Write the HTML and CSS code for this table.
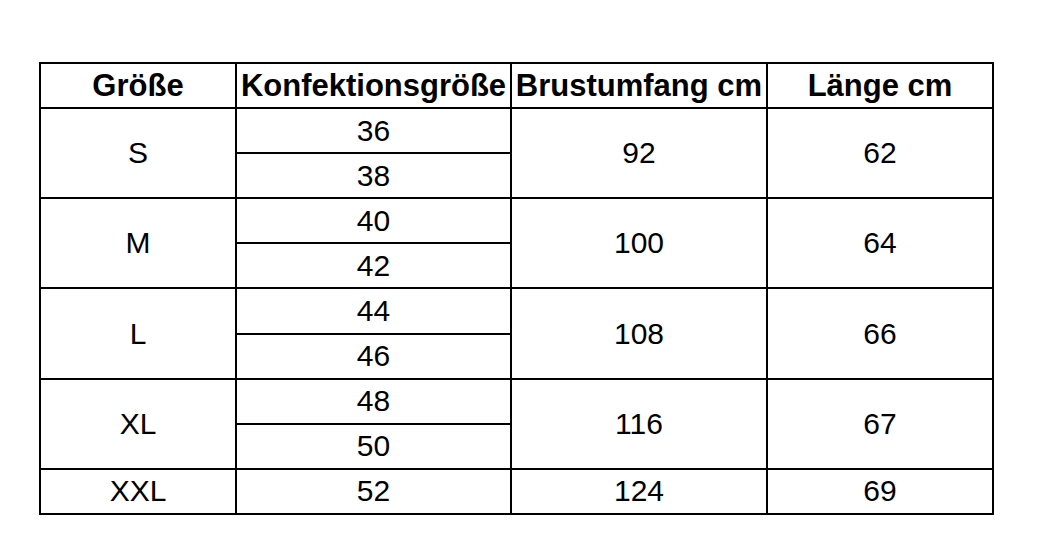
FILE: index.html
```html
<!DOCTYPE html>
<html lang="de">
<head>
<meta charset="utf-8">
<title>Größentabelle</title>
<link rel="stylesheet" href="styles.css">
</head>
<body>
<div class="page">
  <div class="size-table">
    <div class="cell head">Größe</div>
    <div class="cell head">Konfektionsgröße</div>
    <div class="cell head">Brustumfang cm</div>
    <div class="cell head">Länge cm</div>

    <div class="cell span2">S</div>
    <div class="cell">36</div>
    <div class="cell span2">92</div>
    <div class="cell span2">62</div>
    <div class="cell">38</div>

    <div class="cell span2">M</div>
    <div class="cell">40</div>
    <div class="cell span2">100</div>
    <div class="cell span2">64</div>
    <div class="cell">42</div>

    <div class="cell span2">L</div>
    <div class="cell">44</div>
    <div class="cell span2">108</div>
    <div class="cell span2">66</div>
    <div class="cell">46</div>

    <div class="cell span2">XL</div>
    <div class="cell">48</div>
    <div class="cell span2">116</div>
    <div class="cell span2">67</div>
    <div class="cell">50</div>

    <div class="cell">XXL</div>
    <div class="cell">52</div>
    <div class="cell">124</div>
    <div class="cell">69</div>
  </div>
</div>
</body>
</html>
```

FILE: styles.css
```css
html, body {
  margin: 0;
  padding: 0;
  background: #ffffff;
}

.page {
  padding: 62px 0 0 39px;
}

.size-table {
  display: inline-grid;
  grid-template-columns: 194px 273px 254px 224px;
  grid-template-rows: repeat(10, 43.1px);
  gap: 2px;
  padding: 2px;
  background: #000000;
  font-family: "Liberation Sans", Arial, sans-serif;
  color: #000000;
}

.cell {
  background: #ffffff;
  display: flex;
  align-items: center;
  justify-content: center;
  font-size: 30px;
  line-height: 1;
  white-space: nowrap;
}

.head {
  font-weight: bold;
  font-size: 31px;
}

.span2 {
  grid-row: span 2;
}
```
